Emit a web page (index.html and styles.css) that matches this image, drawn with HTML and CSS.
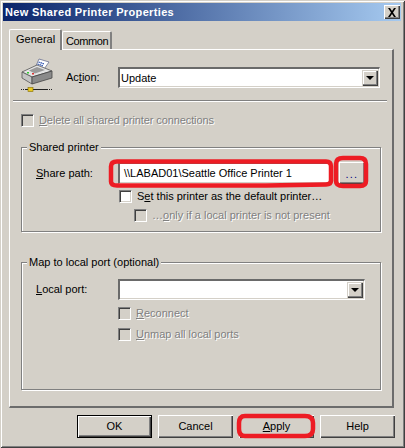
FILE: index.html
```html
<!DOCTYPE html>
<html lang="en">
<head>
<meta charset="utf-8">
<title>New Shared Printer Properties</title>
<link rel="stylesheet" href="styles.css">
</head>
<body>
<div class="window">
  <div class="titlebar">
    <span class="title">New Shared Printer Properties</span>
    <span class="close"><svg width="10" height="9" viewBox="0 0 10 9"><path d="M1 0h2l2 3 2-3h2L6 4.500 9 9H7L5 6 3 9H1l3-4.500z" fill="#000"/></svg></span>
  </div>
  <div class="tabs">
    <div class="tab active">General</div>
    <div class="tab common">Common</div>
  </div>
  <div class="panel">
    <div class="action-row">
      <svg class="printer" width="33" height="34" viewBox="0 0 33 34">
        <path d="M18 1l10 3-7 10-7-4z" fill="#fff" stroke="#6a7090" stroke-width=".8"/>
        <path d="M17.500 4l5.500 2M16.500 6l5.500 2M15.500 8l5 2" stroke="#2a50b0" stroke-width="1.300" stroke-dasharray="1.500 .6"/>
        <path d="M1 14L16 7l15 6-20 6z" fill="#e4e4e4" stroke="#555" stroke-width=".8"/>
        <path d="M8 12.500l8-3.500 8 3-10 3.500z" fill="#9a9a9a"/>
        <path d="M1 14l10 5v7L1 20z" fill="#c4c4c4" stroke="#555" stroke-width=".8"/>
        <path d="M11 19l20-6v7L11 26z" fill="#8a8a8a" stroke="#444" stroke-width=".8"/>
        <rect x="6" y="14" width="2" height="1.500" fill="#3c3"/>
        <rect x="11" y="15" width="2" height="1.500" fill="#d33"/>
        <path d="M0 31.500h32" stroke="#222" stroke-dasharray="1 1"/>
        <path d="M5 31.500h22" stroke="#222"/>
        <rect x="7" y="29.500" width="5" height="4" fill="#e8c820" stroke="#806a00" stroke-width=".6"/>
      </svg>
      <label class="action-label">Ac<u>t</u>ion:</label>
      <div class="combo action-combo">
        <span class="combo-value">Update</span>
        <span class="drop"><i class="arrow"></i></span>
      </div>
    </div>
    <div class="separator"></div>
    <div class="check-row delete-row disabled"><span class="box"></span><span class="text"><u>D</u>elete all shared printer connections</span></div>

    <fieldset class="group shared">
      <legend>Shared printer</legend>
      <div class="field-row">
        <label class="field-label"><u>S</u>hare path:</label>
        <div class="input path">\\LABAD01\Seattle Office Printer 1</div>
        <button class="btn browse">...</button>
      </div>
      <div class="check-row default-row"><span class="box"></span><span class="text">S<u>e</u>t this printer as the default printer…</span></div>
      <div class="check-row sub-row disabled"><span class="box"></span><span class="text">…<u>o</u>nly if a local printer is not present</span></div>
    </fieldset>

    <fieldset class="group port">
      <legend>Map to local port (optional)</legend>
      <div class="field-row">
        <label class="field-label"><u>L</u>ocal port:</label>
        <div class="combo port-combo">
          <span class="combo-value"></span>
          <span class="drop"><i class="arrow"></i></span>
        </div>
      </div>
      <div class="check-row reconnect-row disabled"><span class="box"></span><span class="text"><u>R</u>econnect</span></div>
      <div class="check-row unmap-row disabled"><span class="box"></span><span class="text"><u>U</u>nmap all local ports</span></div>
    </fieldset>
  </div>
  <div class="footer">
    <button class="btn action default">OK</button>
    <button class="btn action">Cancel</button>
    <button class="btn action"><u>A</u>pply</button>
    <button class="btn action">Help</button>
  </div>
</div>
<svg class="marks" width="405" height="448" viewBox="0 0 405 448">
  <path d="M117 161.500H326q5 0 5 5v14q0 4-5 4l-60 1H117q-6 0-6-4v-15q0-5 6-5z"/>
  <path d="M343 158h17q6 0 6 6v17q0 5-6 5h-17q-7 0-7-5v-17q0-6 7-6z"/>
  <path d="M245 416h60q8 0 8 7v6q0 7-8 7h-60q-6 0-6-7v-6q0-7 6-7z"/>
</svg>
</body>
</html>
```

FILE: styles.css
```css
* { box-sizing: border-box; }
html, body { margin: 0; padding: 0; }
body {
  width: 405px;
  height: 448px;
  overflow: hidden;
  position: relative;
  background: #d4d0c8;
  font-family: "Liberation Sans", Arial, sans-serif;
  font-size: 11px;
  line-height: 13px;
  color: #000;
}
.window {
  width: 405px;
  height: 448px;
  padding: 3px 4px 0 3px;
  background: #d4d0c8;
  box-shadow: inset 1px 1px 0 #d4d0c8, inset -1px -1px 0 #404040, inset 2px 2px 0 #fff, inset -2px -2px 0 #808080;
}
.titlebar {
  height: 18px;
  display: flex;
  align-items: center;
  justify-content: space-between;
  padding: 0 1px 0 2px;
  background: linear-gradient(90deg, #0a246a, #a6caf0);
}
.title {
  color: #fff;
  font-weight: bold;
  font-size: 11px;
  letter-spacing: 0.35px;
}
.close {
  width: 16px;
  height: 14px;
  display: flex;
  align-items: center;
  justify-content: center;
  background: #d4d0c8;
  box-shadow: inset 1px 1px 0 #fff, inset -1px -1px 0 #404040, inset -2px -2px 0 #808080;
}
.tabs {
  display: flex;
  align-items: flex-end;
  height: 28px;
  padding-left: 6px;
}
.tab {
  position: relative;
  height: 18px;
  width: 50px;
  padding: 3px 0 0 3px;
  background: #d4d0c8;
  border-top: 1px solid #fff;
  border-left: 1px solid #fff;
  border-right: 2px solid #808080;
  border-radius: 2px 2px 0 0;
}
.tab.common { letter-spacing: -0.4px; }
.tab.active {
  height: 21px;
  width: 53px;
  padding: 3px 0 0 6px;
  margin-bottom: -1px;
  z-index: 1;
}
.panel {
  height: 359px;
  margin-left: 6px;
  width: 385px;
  padding: 8px 0 0 0;
  border-top: 1px solid #fff;
  border-left: 1px solid #fff;
  border-right: 2px solid #6c6c6c;
  border-bottom: 2px solid #6c6c6c;
}
.action-row {
  display: flex;
  align-items: flex-start;
  height: 33px;
  padding-left: 11px;
}
.printer { flex: none; }
.action-label { margin: 13px 0 0 12px; width: 52px; }
.combo, .input {
  display: flex;
  align-items: center;
  background: #fff;
  border-top: 2px solid #6a6a6a;
  border-left: 2px solid #6a6a6a;
  border-right: 1px solid #fff;
  border-bottom: 1px solid #fff;
  box-shadow: inset -1px -1px 0 #d4d0c8;
}
.combo { height: 21px; }
.action-combo { width: 262px; margin-top: 9px; }
.combo-value { flex: 1; padding-left: 1px; }
.drop {
  flex: none;
  width: 16px;
  height: 16px;
  margin: 0 1px 1px 0;
  display: flex;
  align-items: center;
  justify-content: center;
  background: #d4d0c8;
  box-shadow: inset 1px 1px 0 #d4d0c8, inset -1px -1px 0 #404040, inset -2px -2px 0 #808080, inset 2px 2px 0 #fff;
}
.arrow {
  width: 0;
  height: 0;
  border-left: 4px solid transparent;
  border-right: 4px solid transparent;
  border-top: 4px solid #000;
}
.separator {
  height: 2px;
  margin: 9px 5px 0 3px;
  background: #808080;
  border-bottom: 1px solid #fff;
}
.check-row {
  display: flex;
  align-items: center;
  height: 13px;
}
.box {
  flex: none;
  width: 13px;
  height: 13px;
  background: #fff;
  border-top: 1px solid #808080;
  border-left: 1px solid #808080;
  border-right: 1px solid #fff;
  border-bottom: 1px solid #fff;
  box-shadow: inset 1px 1px 0 #404040, inset -1px -1px 0 #d4d0c8;
}
.text { margin-left: 5px; white-space: nowrap; }
.disabled .box { background: #d4d0c8; }
.disabled .text { color: #808080; text-shadow: 1px 1px 0 #fff; }
.delete-row { margin: 12px 0 0 11px; }
.delete-row .text { letter-spacing: -0.1px; }
.group {
  margin: 0 0 0 11px;
  width: 360px;
  padding: 0;
  min-width: 0;
  border: 1px solid #808080;
  box-shadow: 1px 1px 0 #fff, inset 1px 1px 0 #fff;
}
.group legend {
  margin-left: 5px;
  padding: 0 2px;
  background: #d4d0c8;
  white-space: nowrap;
}
.shared { margin-top: 14px; height: 91px; }
.port { margin-top: 24px; height: 134px; }
.field-row {
  display: flex;
  align-items: center;
  height: 22px;
}
.shared .field-row { margin-top: 8px; }
.port .field-row { margin-top: 10px; height: 21px; }
.field-label { width: 96px; padding-left: 14px; flex: none; }
.input { width: 214px; height: 22px; padding-left: 4px; white-space: nowrap; }
.btn {
  font: inherit;
  color: #000;
  background: #d4d0c8;
  border: 0;
  padding: 0;
  box-shadow: inset 1px 1px 0 #fff, inset -1px -1px 0 #404040, inset -2px -2px 0 #808080;
}
.browse { width: 26px; height: 22px; margin-left: 7px; letter-spacing: 1.2px; padding-top: 3px; color: #000080; }
.default-row { margin: 6px 0 0 97px; }
.sub-row { margin: 6px 0 0 112px; }
.port-combo { width: 247px; }
.reconnect-row { margin: 7px 0 0 96px; }
.unmap-row { margin: 8px 0 0 96px; }
.footer {
  display: flex;
  justify-content: flex-end;
  gap: 6px;
  padding: 7px 6px 0 0;
}
.action { width: 75px; height: 23px; }
.default {
  outline: 1px solid #000;
  outline-offset: -1px;
  box-shadow: inset 2px 2px 0 #fff, inset -2px -2px 0 #404040, inset -3px -3px 0 #808080;
}
.marks {
  position: absolute;
  left: 0;
  top: 0;
  pointer-events: none;
}
.marks path { fill: none; stroke: #ed1c24; stroke-width: 4.500; }
```
